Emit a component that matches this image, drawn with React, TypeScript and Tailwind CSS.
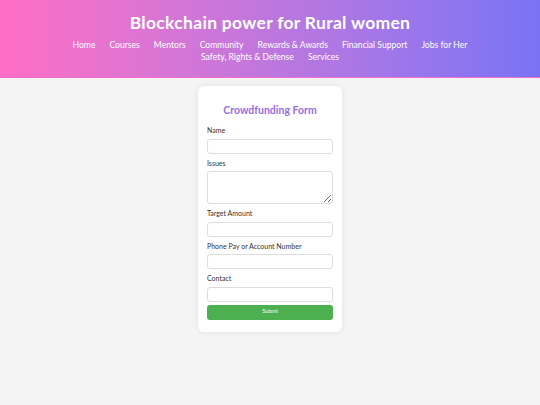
const links = [
  'Home',
  'Courses',
  'Mentors',
  'Community',
  'Rewards & Awards',
  'Financial Support',
  'Jobs for Her',
  'Safety, Rights & Defense',
  'Services',
];

const fields = [
  { label: 'Name', area: false },
  { label: 'Issues', area: true },
  { label: 'Target Amount', area: false },
  { label: 'Phone Pay or Account Number', area: false },
  { label: 'Contact', area: false },
];

export default function App() {
  return (
    <div className="min-h-[405px] bg-[#f4f4f4] font-['Lato',sans-serif]">
      <header className="bg-gradient-to-r from-[#ff6ec4] to-[#7873f5] border-b border-[#ee6ed2] pt-[12px] pb-[14px] text-center text-white">
        <h1 className="text-[17.5px] font-bold leading-[22px] tracking-[0.3px]">Blockchain power for Rural women</h1>
        <nav className="mx-auto mt-[5px] flex max-w-[440px] flex-wrap justify-center pl-[14px] text-[8.6px] leading-[12px]">
          {links.map((l) => (
            <a key={l} href="#" className="mr-[14px] whitespace-nowrap">
              {l}
            </a>
          ))}
        </nav>
      </header>

      <main className="flex justify-center pt-[8px]">
        <div className="w-[144px] rounded-[6px] bg-white px-[9px] pt-[16px] pb-[12px] shadow-[0_0_6px_rgba(0,0,0,0.08)]">
          <h2 className="mb-[7px] text-center text-[10.5px] font-bold leading-[16px] text-[#9a6de0]">Crowdfunding Form</h2>
          <form onSubmit={(e) => e.preventDefault()}>
            {fields.map((f) => (
              <div key={f.label}>
                <label className="mt-[4px] mb-[3.5px] block text-[7px] leading-[10px] text-[#333]">{f.label}</label>
                {f.area ? (
                  <textarea className="block h-[33px] w-full resize-y rounded-[3px] border border-[#ddd] bg-white" />
                ) : (
                  <input className="block h-[15px] w-full rounded-[3px] border border-[#ddd] bg-white" />
                )}
              </div>
            ))}
            <button
              type="submit"
              className="mt-[3px] block h-[15px] w-full rounded-[3px] bg-[#4caf50] font-['Liberation_Sans',sans-serif] text-[5px] text-white"
            >
              Submit
            </button>
          </form>
        </div>
      </main>
    </div>
  );
}
